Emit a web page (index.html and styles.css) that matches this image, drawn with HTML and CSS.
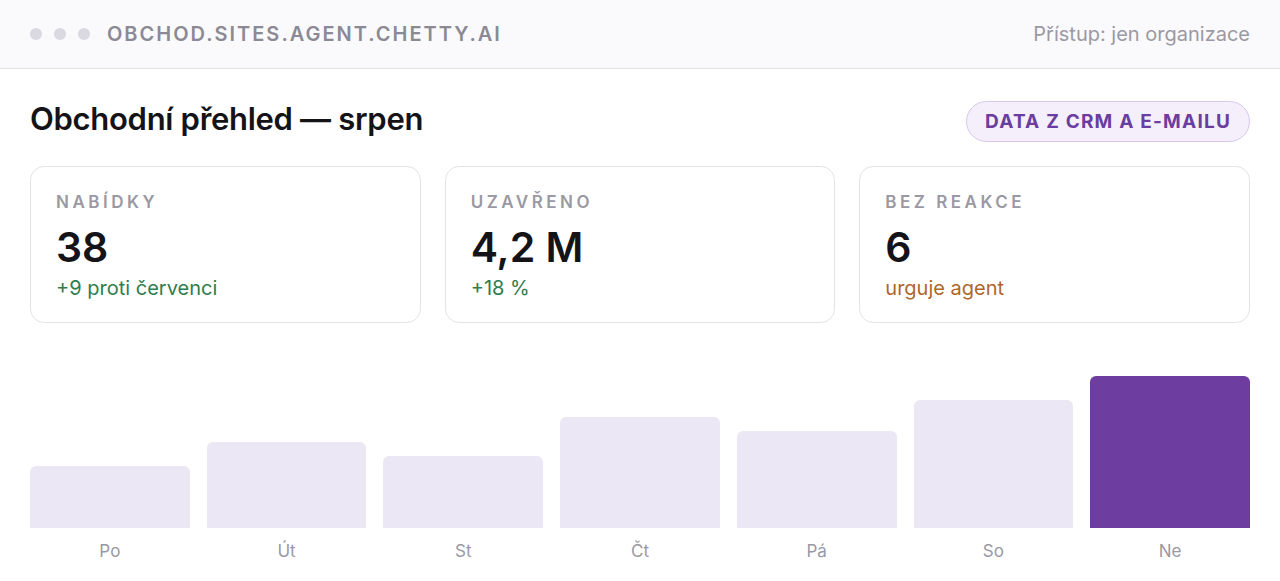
FILE: index.html
```html
<!DOCTYPE html>
<html lang="cs">
<head>
<meta charset="utf-8">
<title>Obchodní přehled</title>
<link rel="stylesheet" href="styles.css">
</head>
<body>
<div class="topbar">
  <div class="left">
    <span class="dot"></span><span class="dot"></span><span class="dot"></span>
    <span class="url">OBCHOD.SITES.AGENT.CHETTY.AI</span>
  </div>
  <div class="access">Přístup: jen organizace</div>
</div>
<main class="content">
  <div class="head">
    <h1>Obchodní přehled — srpen</h1>
    <span class="badge">DATA Z CRM A E-MAILU</span>
  </div>
  <div class="cards">
    <div class="card">
      <div class="label">NABÍDKY</div>
      <div class="value">38</div>
      <div class="sub green">+9 proti červenci</div>
    </div>
    <div class="card">
      <div class="label">UZAVŘENO</div>
      <div class="value">4,2 M</div>
      <div class="sub green">+18 %</div>
    </div>
    <div class="card">
      <div class="label">BEZ REAKCE</div>
      <div class="value">6</div>
      <div class="sub orange">urguje agent</div>
    </div>
  </div>
  <div class="chart">
    <div class="col"><div class="bar" style="height:62px"></div><div class="day">Po</div></div>
    <div class="col"><div class="bar" style="height:86px"></div><div class="day">Út</div></div>
    <div class="col"><div class="bar" style="height:72px"></div><div class="day">St</div></div>
    <div class="col"><div class="bar" style="height:111px"></div><div class="day">Čt</div></div>
    <div class="col"><div class="bar" style="height:97px"></div><div class="day">Pá</div></div>
    <div class="col"><div class="bar" style="height:128px"></div><div class="day">So</div></div>
    <div class="col"><div class="bar active" style="height:152px"></div><div class="day">Ne</div></div>
  </div>
</main>
</body>
</html>
```

FILE: styles.css
```css
* { box-sizing: border-box; }
html, body { margin: 0; padding: 0; }
body {
  font-family: Inter, "Noto Sans", "Liberation Sans", sans-serif;
  background: #ffffff;
  color: #141418;
  width: 1280px;
  height: 581px;
  overflow: hidden;
}
.topbar {
  height: 69px;
  background: #fafafc;
  border-bottom: 1px solid #e2e2e6;
  display: flex;
  align-items: center;
  justify-content: space-between;
  padding: 0 30px;
}
.left { display: flex; align-items: center; }
.dot {
  width: 12px; height: 12px; border-radius: 50%;
  background: #dad8e0;
  margin-right: 12px;
}
.url {
  margin-left: 5px;
  font-size: 20px;
  font-weight: 600;
  letter-spacing: 2px;
  color: #8b8a94;
}
.access {
  font-size: 20px;
  color: #9a99a3;
}
.content { padding: 0 30px; }
.head {
  display: flex;
  align-items: center;
  justify-content: space-between;
  height: 97px;
  padding-top: 1px;
}
h1 {
  margin: 0;
  font-size: 31px;
  font-weight: 600;
  letter-spacing: -0.3px;
  color: #141418;
}
.badge {
  display: inline-flex;
  align-items: center;
  height: 41px;
  padding: 0 18px;
  border-radius: 21px;
  background: #f4effb;
  border: 1px solid #d8c8ee;
  color: #6a3d9f;
  font-size: 19px;
  font-weight: 700;
  letter-spacing: 1.2px;
  margin-top: 7px;
}
.cards {
  display: grid;
  grid-template-columns: repeat(3, 1fr);
  gap: 24px;
}
.card {
  height: 157px;
  border: 1px solid #e3e3e8;
  border-radius: 14px;
  padding: 24px 25px 0;
}
.label {
  font-size: 17px;
  font-weight: 600;
  letter-spacing: 3.5px;
  color: #9a99a3;
  line-height: 22px;
}
.value {
  margin-top: 8px;
  font-size: 41px;
  font-weight: 600;
  line-height: 52px;
  color: #141418;
}
.sub {
  font-size: 20px;
  line-height: 24px;
  margin-top: 3px;
}
.green { color: #2f7d4d; }
.orange { color: #b0662b; }
.chart {
  display: grid;
  grid-template-columns: repeat(7, 1fr);
  gap: 17px;
  margin-top: 53px;
  height: 198px;
  align-items: end;
}
.col {
  display: flex;
  flex-direction: column;
  justify-content: flex-end;
  height: 100%;
}
.bar {
  background: #ece7f4;
  border-radius: 6px 6px 0 0;
}
.bar.active { background: #6d3e9f; }
.day {
  text-align: center;
  font-size: 17px;
  color: #9a99a3;
  height: 46px;
  line-height: 46px;
}
```
